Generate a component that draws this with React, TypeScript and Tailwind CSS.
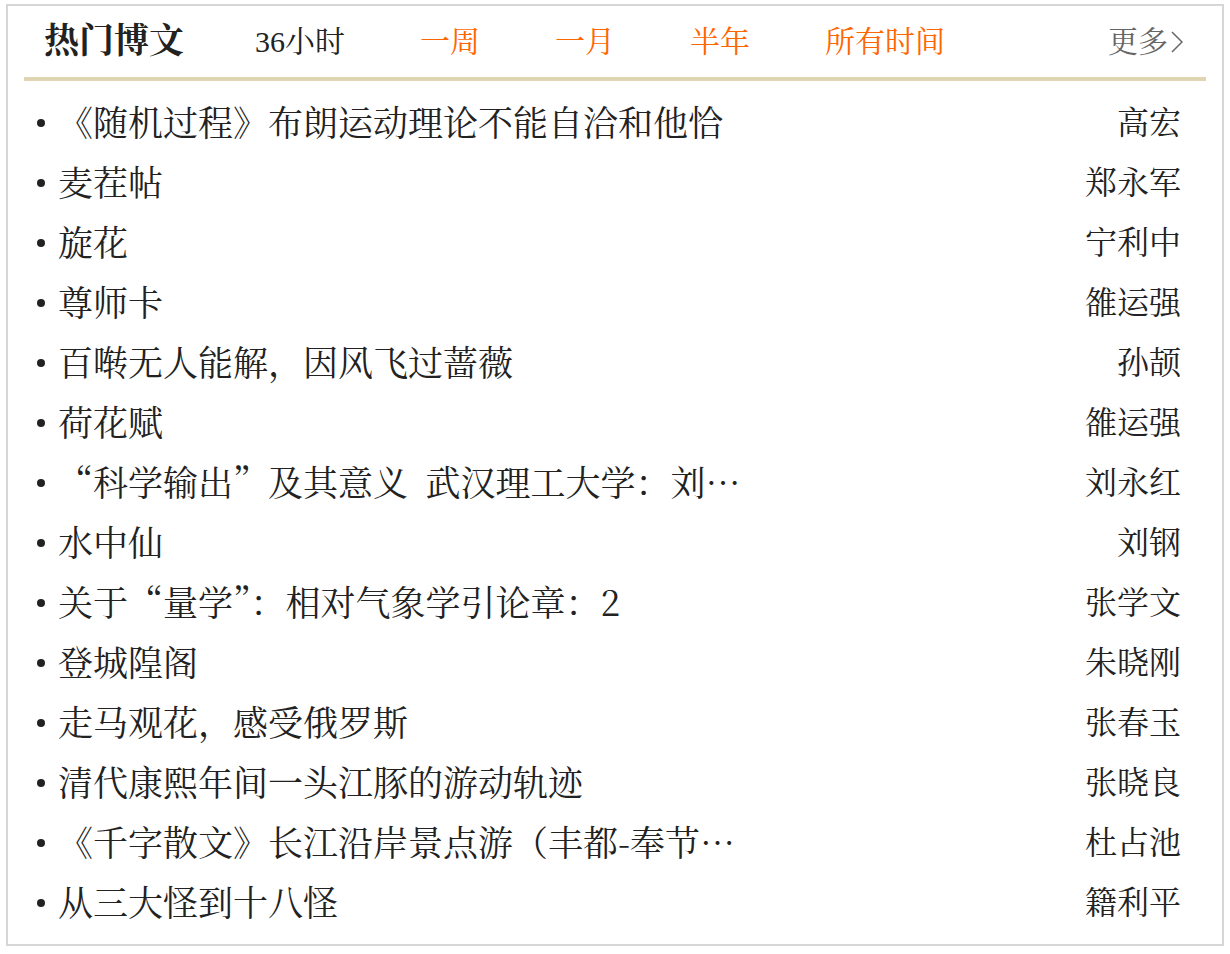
const tabs = [
  { label: "36小时", active: true },
  { label: "一周", active: false },
  { label: "一月", active: false },
  { label: "半年", active: false },
  { label: "所有时间", active: false },
]

const posts = [
  { title: "《随机过程》布朗运动理论不能自洽和他恰", author: "高宏" },
  { title: "麦茬帖", author: "郑永军" },
  { title: "旋花", author: "宁利中" },
  { title: "尊师卡", author: "雒运强" },
  { title: "百啭无人能解，因风飞过蔷薇", author: "孙颉" },
  { title: "荷花赋", author: "雒运强" },
  { title: "“科学输出”及其意义\u2002武汉理工大学：刘…", author: "刘永红" },
  { title: "水中仙", author: "刘钢" },
  { title: "关于“量学”：相对气象学引论章：2", author: "张学文" },
  { title: "登城隍阁", author: "朱晓刚" },
  { title: "走马观花，感受俄罗斯", author: "张春玉" },
  { title: "清代康熙年间一头江豚的游动轨迹", author: "张晓良" },
  { title: "《千字散文》长江沿岸景点游（丰都-奉节…", author: "杜占池" },
  { title: "从三大怪到十八怪", author: "籍利平" },
]

export default function App() {
  return (
    <div className="w-[1230px] h-[954px] bg-white font-['Liberation_Serif','Noto_Serif_CJK_SC','Noto_Sans_CJK_SC',serif] text-[#222]">
      <div className="ml-[6px] w-[1218px] border-x-2 border-b-2 border-[#d6d6d6] pb-[11px]">
        <div className="mt-1 h-[2px] bg-[#d6d6d6]" />

        <div className="mx-4">
          {/* header */}
          <div className="h-[75px] flex items-center pl-5 pr-[23px] border-b-4 border-[#e0d5b2]">
            <h2 className="w-[211px] text-[35px] font-bold leading-none text-[#222]">热门博文</h2>
            {tabs.map((tab) => (
              <span
                key={tab.label}
                className={`mr-[75px] text-[30px] leading-none ${tab.active ? "text-[#222]" : "text-[#ff6600]"}`}
              >
                {tab.label}
              </span>
            ))}
            <a className="ml-auto flex items-center text-[30px] leading-none text-[#666]">
              更多
              <svg width="12" height="22" viewBox="0 0 12 22" className="ml-[3px]">
                <polyline points="1,1 11,11 1,21" fill="none" stroke="#666" strokeWidth="1.5" />
              </svg>
            </a>
          </div>

          {/* list */}
          <ul className="pt-3">
            {posts.map((post, i) => (
              <li key={i} className="h-[60px] flex items-center pl-[13px] pr-[25px]">
                <span className="w-2 h-2 rounded-full bg-[#222] shrink-0" />
                <span className="ml-[13px] pb-1 text-[35px] leading-none whitespace-nowrap font-['Noto_Serif_CJK_SC','Noto_Sans_CJK_SC','Liberation_Serif',serif]">
                  {post.title}
                </span>
                <span className="ml-auto text-[32px] leading-none whitespace-nowrap">{post.author}</span>
              </li>
            ))}
          </ul>
        </div>
      </div>
    </div>
  )
}
